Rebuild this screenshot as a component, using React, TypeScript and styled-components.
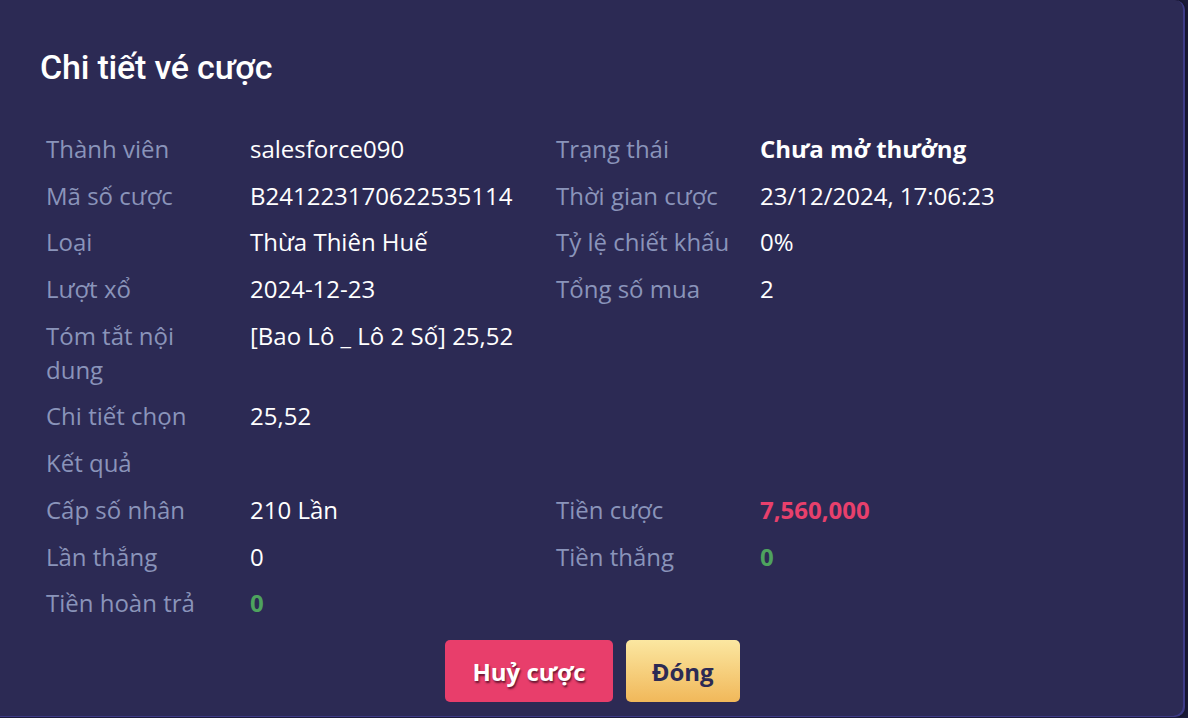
import React from "react";
import styled, { createGlobalStyle } from "styled-components";

const GlobalStyle = createGlobalStyle`
  html, body {
    margin: 0;
    padding: 0;
    background: #1c1b3b;
  }
  body {
    font-family: "Open Sans", "Noto Sans", sans-serif;
  }
`;

const Modal = styled.div`
  box-sizing: border-box;
  width: 1185px;
  height: 717px;
  background: #2c2a54;
  border-radius: 0 10px 10px 0;
  box-shadow: inset -2px -1px 0 #3d3a86, 0 0 6px rgba(0, 0, 0, 0.5);
  padding: 45px 0 0 40px;
  display: flex;
  flex-direction: column;
`;

const Title = styled.h1`
  margin: 0;
  font-family: Roboto, "Noto Sans", sans-serif;
  font-weight: 500;
  font-size: 34px;
  line-height: 44px;
  color: #ffffff;
  letter-spacing: -0.2px;
`;

const Grid = styled.div`
  margin-top: 43px;
  padding-left: 6px;
  display: grid;
  grid-template-columns: 204px 306px 204px 1fr;
  row-gap: 12.7px;
`;

const Label = styled.div`
  font-size: 24px;
  line-height: 34px;
  color: #8a94ba;
  padding-right: 20px;
`;

type ValueProps = { $tone?: "plain" | "strong" | "red" | "green" };

const toneColor = {
  plain: "#ffffff",
  strong: "#ffffff",
  red: "#e8406c",
  green: "#4ea35e",
};

const Value = styled.div<ValueProps>`
  font-size: 24px;
  line-height: 34px;
  color: ${(p) => toneColor[p.$tone || "plain"]};
  font-weight: ${(p) => (p.$tone && p.$tone !== "plain" ? 700 : 400)};
  white-space: nowrap;
`;

const Actions = styled.div`
  margin-top: 20px;
  padding-right: 40px;
  display: flex;
  justify-content: center;
  gap: 13px;
`;

const Button = styled.button<{ $variant: "danger" | "gold" }>`
  height: 62px;
  padding: 0 ${(p) => (p.$variant === "danger" ? "27px" : "26px")};
  border: none;
  border-radius: 5px;
  font-family: "Open Sans", "Noto Sans", sans-serif;
  font-weight: 700;
  font-size: 24px;
  cursor: pointer;
  color: ${(p) => (p.$variant === "danger" ? "#ffffff" : "#2c2a54")};
  background: ${(p) =>
    p.$variant === "danger"
      ? "#e83e6b"
      : "linear-gradient(180deg, #fbe7a1 0%, #f1b85a 100%)"};
  text-shadow: ${(p) =>
    p.$variant === "danger" ? "1px 2px 2px rgba(60, 10, 30, 0.75)" : "none"};
`;

type Cell = { label: string; value?: string; tone?: ValueProps["$tone"] };

const rows: [Cell, Cell | null][] = [
  [
    { label: "Thành viên", value: "salesforce090" },
    { label: "Trạng thái", value: "Chưa mở thưởng", tone: "strong" },
  ],
  [
    { label: "Mã số cược", value: "B241223170622535114" },
    { label: "Thời gian cược", value: "23/12/2024, 17:06:23" },
  ],
  [
    { label: "Loại", value: "Thừa Thiên Huế" },
    { label: "Tỷ lệ chiết khấu", value: "0%" },
  ],
  [
    { label: "Lượt xổ", value: "2024-12-23" },
    { label: "Tổng số mua", value: "2" },
  ],
  [{ label: "Tóm tắt nội dung", value: "[Bao Lô _ Lô 2 Số] 25,52" }, null],
  [{ label: "Chi tiết chọn", value: "25,52" }, null],
  [{ label: "Kết quả", value: "" }, null],
  [
    { label: "Cấp số nhân", value: "210 Lần" },
    { label: "Tiền cược", value: "7,560,000", tone: "red" },
  ],
  [
    { label: "Lần thắng", value: "0" },
    { label: "Tiền thắng", value: "0", tone: "green" },
  ],
  [{ label: "Tiền hoàn trả", value: "0", tone: "green" }, null],
];

const renderCell = (cell: Cell | null, key: string) =>
  cell ? (
    <React.Fragment key={key}>
      <Label>{cell.label}</Label>
      <Value $tone={cell.tone}>{cell.value}</Value>
    </React.Fragment>
  ) : (
    <React.Fragment key={key}>
      <div />
      <div />
    </React.Fragment>
  );

export default function App() {
  return (
    <>
      <GlobalStyle />
      <Modal>
        <Title>Chi tiết vé cược</Title>
        <Grid>
          {rows.map(([left, right], i) => (
            <React.Fragment key={i}>
              {renderCell(left, `l${i}`)}
              {renderCell(right, `r${i}`)}
            </React.Fragment>
          ))}
        </Grid>
        <Actions>
          <Button $variant="danger">Huỷ cược</Button>
          <Button $variant="gold">Đóng</Button>
        </Actions>
      </Modal>
    </>
  );
}
